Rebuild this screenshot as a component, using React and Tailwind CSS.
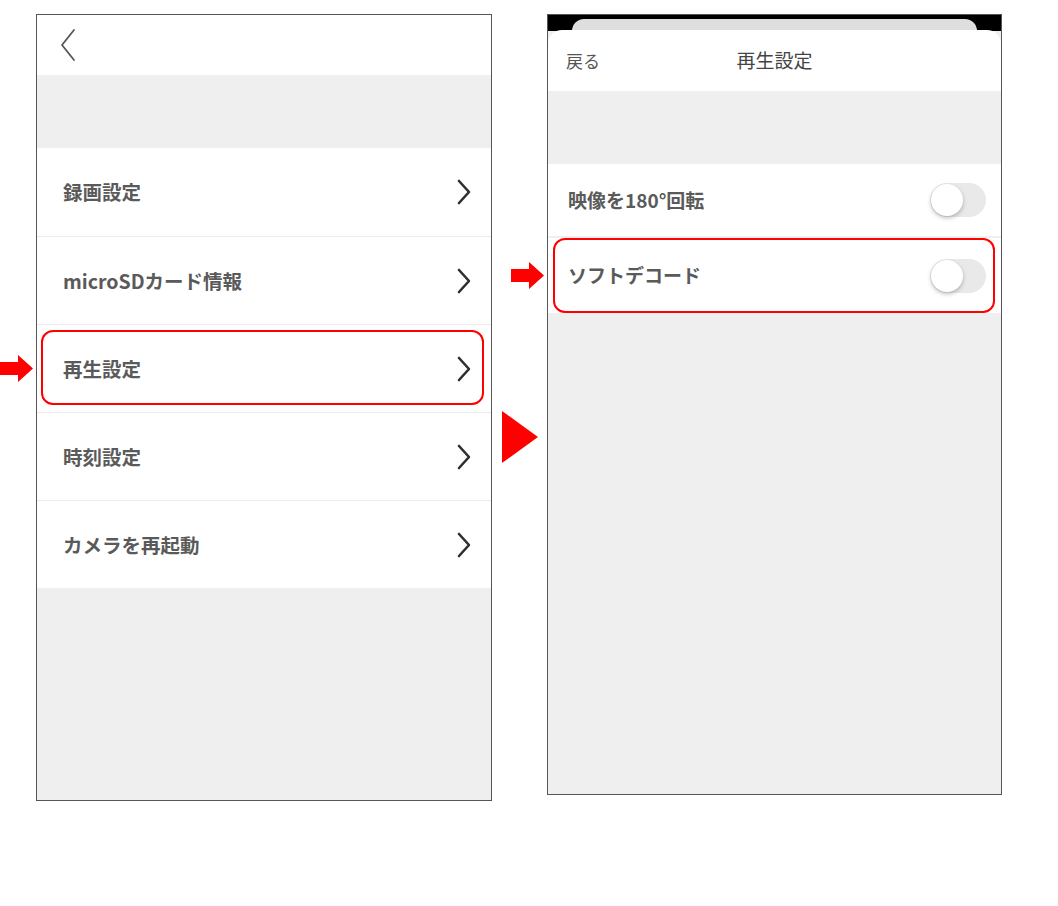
const font = { fontFamily: '"Noto Sans CJK JP", "Noto Sans", sans-serif' };

const menuItems = ["録画設定", "microSDカード情報", "再生設定", "時刻設定", "カメラを再起動"];

function Chevron() {
  return (
    <svg width="16" height="26" viewBox="0 0 16 26" fill="none">
      <path d="M3 2 L13 13 L3 24" stroke="#2f2f2f" strokeWidth="2.6" strokeLinecap="round" strokeLinejoin="round" />
    </svg>
  );
}

function RedArrow() {
  return (
    <svg width="33" height="27" viewBox="0 0 33 27">
      <path d="M0 7 H18 V0 L33 13.5 L18 27 V20 H0 Z" fill="#ff0000" />
    </svg>
  );
}

function Toggle() {
  return (
    <div className="w-[56px] h-[34px] rounded-full bg-[#e9e9e9] flex items-center">
      <div className="w-[32px] h-[32px] rounded-full bg-white shadow-[0_2px_4px_rgba(0,0,0,0.25)] ml-px" />
    </div>
  );
}

export default function App() {
  return (
    <div className="w-[1058px] h-[906px] bg-white flex items-start pt-[14px]" style={font}>
      {/* left arrow column */}
      <div className="w-[36px] shrink-0 pt-[341px]">
        <RedArrow />
      </div>

      {/* settings list */}
      <div className="w-[456px] h-[787px] shrink-0 border border-[#555] bg-[#efefef] flex flex-col">
        <div className="h-[60px] bg-white flex items-center pl-[22px]">
          <svg width="18" height="34" viewBox="0 0 18 34" fill="none">
            <path d="M15 2 L3 17 L15 32" stroke="#555" strokeWidth="1.8" strokeLinecap="round" strokeLinejoin="round" />
          </svg>
        </div>
        <div className="h-[73px]" />
        <div className="flex flex-col bg-white">
          {menuItems.map((item, i) => (
            <div
              key={item}
              className={`relative h-[88px] flex items-center justify-between pl-[26px] pr-[19px] ${i > 0 ? "border-t border-[#ececec]" : ""}`}
            >
              <span className="text-[19.5px] font-bold text-[#5a5a5a]">{item}</span>
              <Chevron />
              {item === "再生設定" && (
                <div className="absolute left-[4px] right-[7px] top-[5px] bottom-[7px] border-2 border-[#ff0000] rounded-[12px]" />
              )}
            </div>
          ))}
        </div>
      </div>

      {/* middle annotations */}
      <div className="w-[55px] shrink-0 flex flex-col">
        <div className="mt-[248px] ml-[19px]">
          <RedArrow />
        </div>
        <div className="mt-[122px] ml-[10px] w-0 h-0 border-y-[26px] border-y-transparent border-l-[36px] border-l-[#ff0000]" />
      </div>

      {/* playback settings */}
      <div className="w-[455px] h-[781px] shrink-0 border border-[#555] bg-[#efefef] flex flex-col">
        <div className="h-[16px] bg-black flex justify-center pt-[4px]">
          <div className="w-[405px] h-full bg-[#dedede] rounded-t-[12px]" />
        </div>
        <div className="h-[61px] bg-white rounded-t-[14px] -mt-[1px] flex items-center relative">
          <span className="ml-[18px] text-[17px] text-[#555]">戻る</span>
          <span className="absolute left-0 right-0 text-center text-[19px] text-[#444] pointer-events-none">再生設定</span>
        </div>
        <div className="h-[73px]" />
        <div className="bg-white h-[72px] flex items-center justify-between pl-[20px] pr-[15px]">
          <span className="text-[19px] font-bold text-[#5a5a5a]">映像を180°回転</span>
          <Toggle />
        </div>
        <div className="h-[2px]" />
        <div className="relative bg-white h-[75px] flex items-center justify-between pl-[20px] pr-[15px]">
          <span className="text-[19px] font-bold text-[#5a5a5a]">ソフトデコード</span>
          <Toggle />
          <div className="absolute left-[5px] right-[6px] top-0 bottom-0 border-2 border-[#ff0000] rounded-[12px]" />
        </div>
      </div>
    </div>
  );
}
